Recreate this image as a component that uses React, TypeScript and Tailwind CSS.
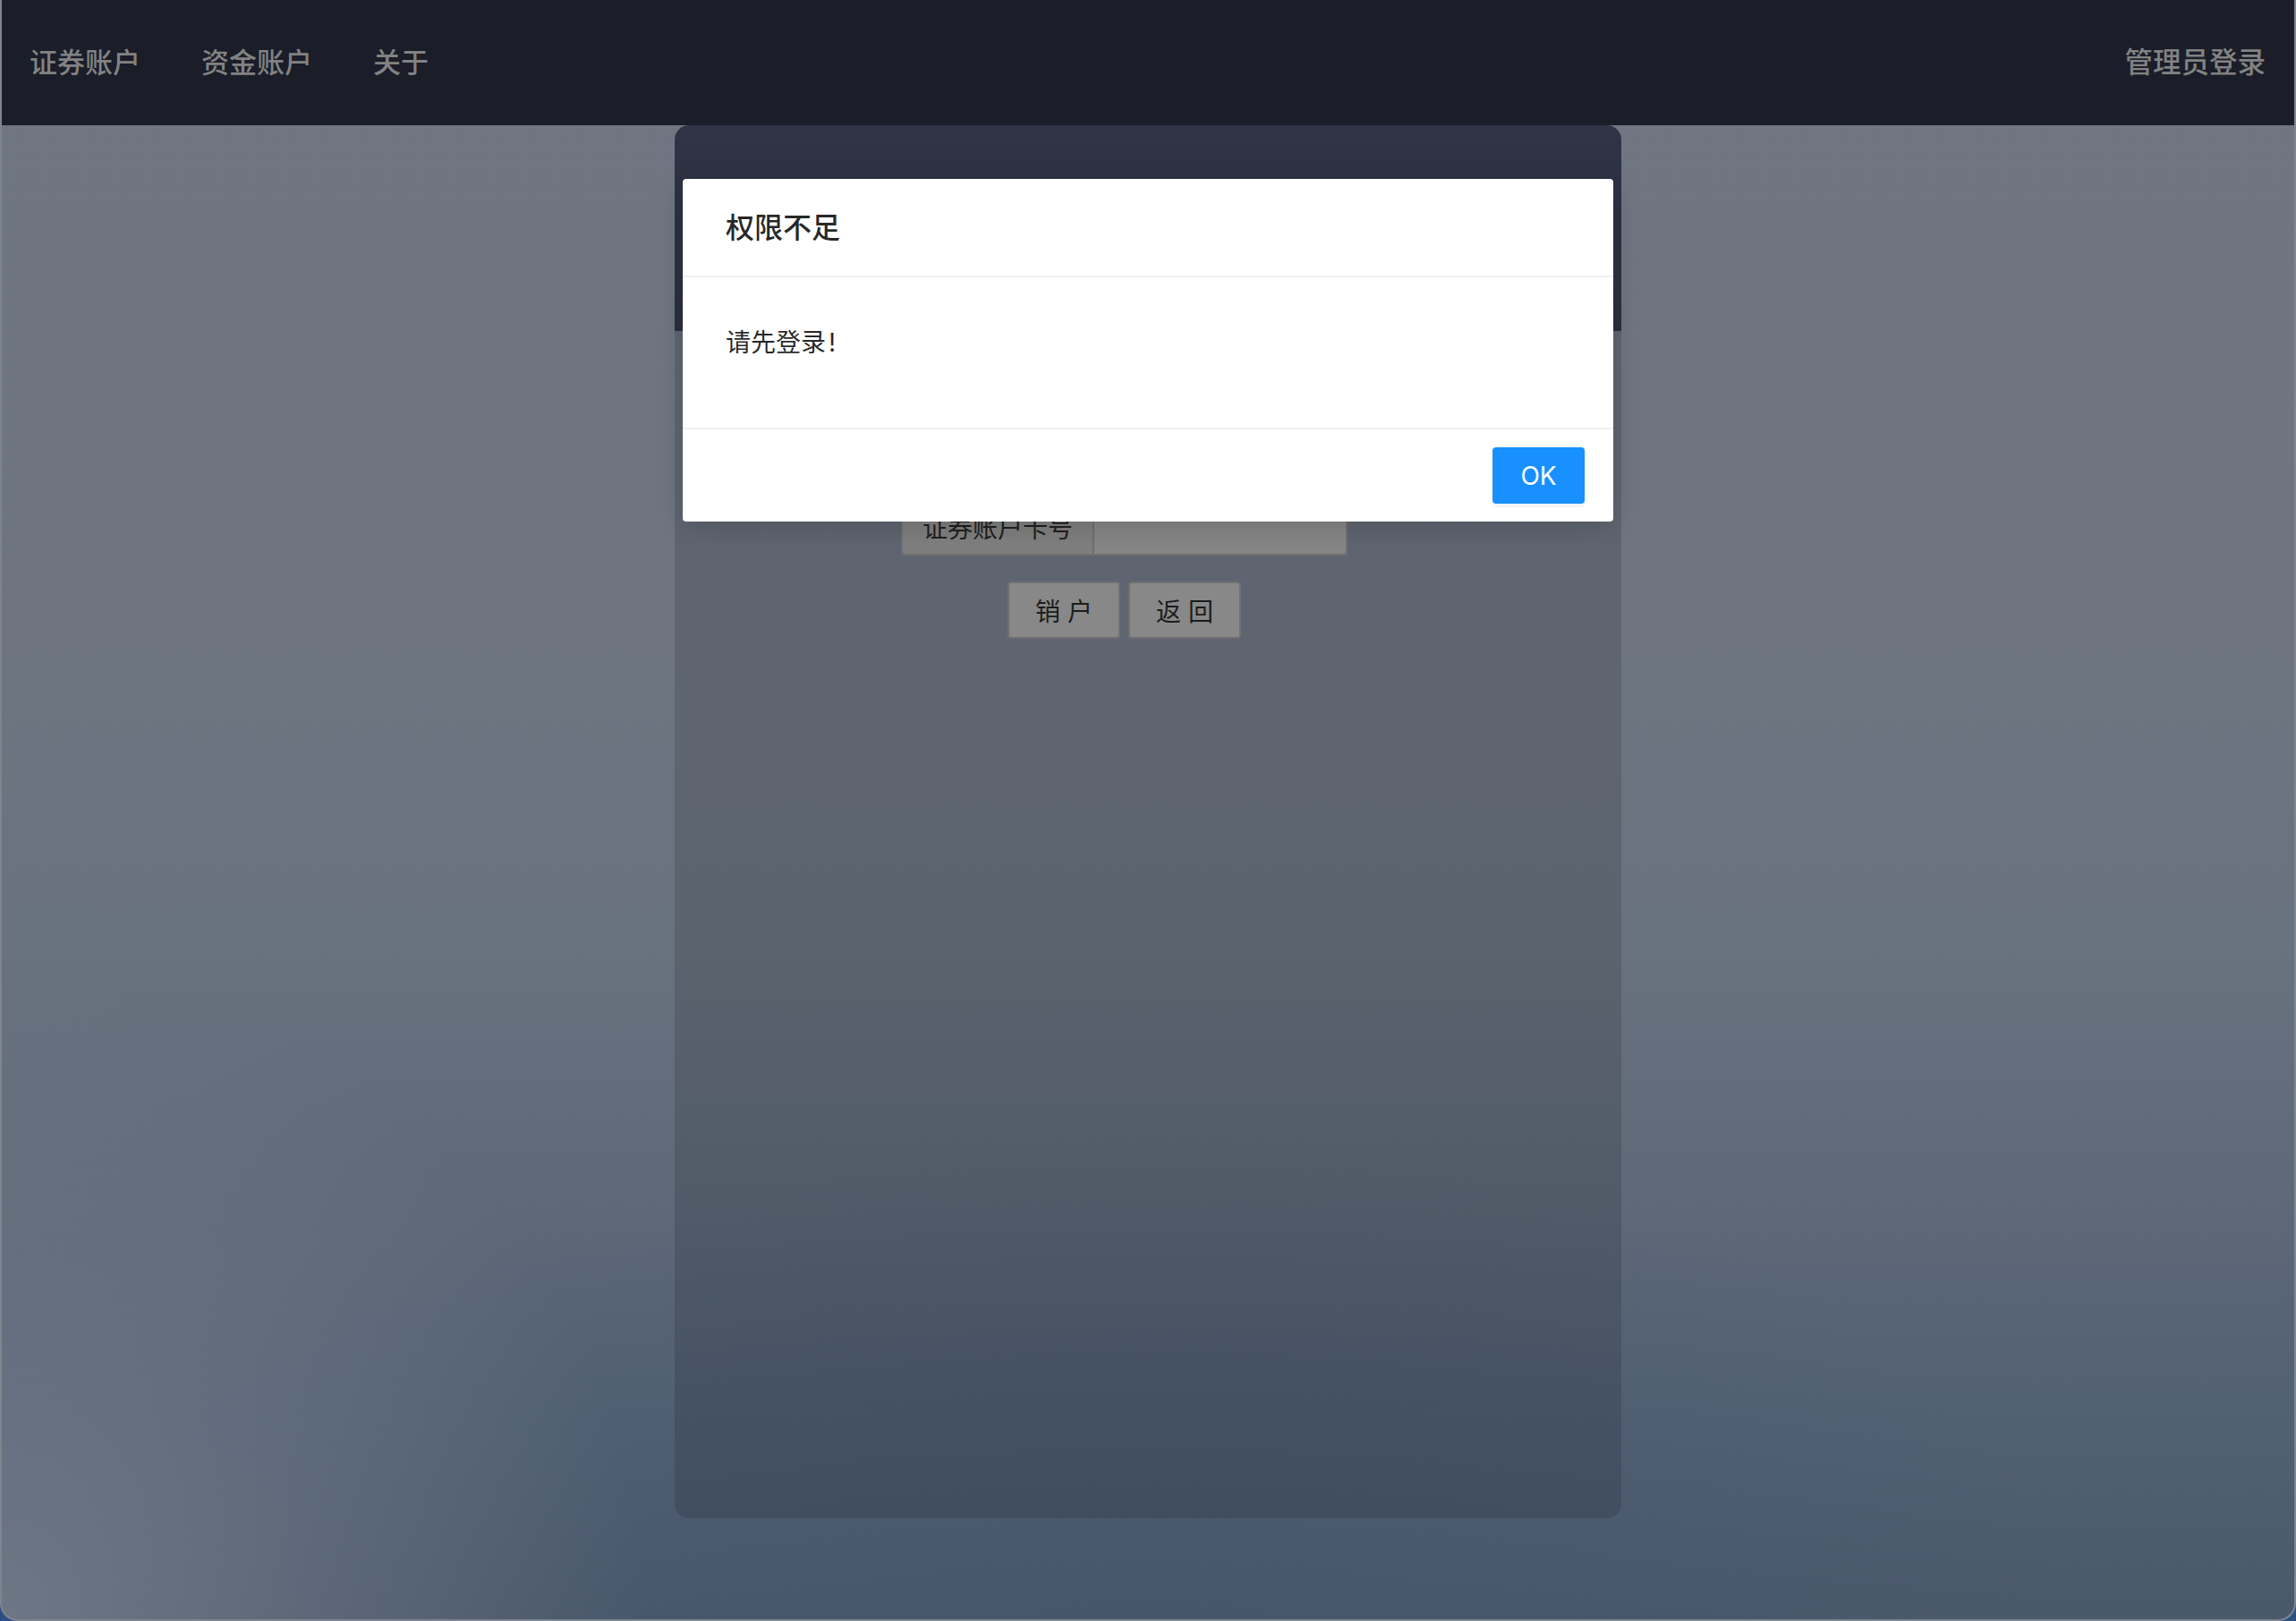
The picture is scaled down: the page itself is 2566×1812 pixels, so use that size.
import React from "react";

const cjk = { fontFamily: '"Noto Sans CJK SC", "Noto Sans", sans-serif' };
const latin = { fontFamily: 'Inter, "Noto Sans CJK SC", sans-serif' };

export default function App() {
  return (
    <div className="w-[2566px] h-[1812px] bg-[#2d4f86] overflow-hidden" style={cjk}>
      <div className="relative w-full h-full flex flex-col rounded-b-[20px] overflow-hidden border-x-2 border-b-2 border-[#7f858e] bg-[radial-gradient(ellipse_28%_40%_at_0%_100%,rgba(118,126,140,0.8),transparent),radial-gradient(ellipse_40%_30%_at_50%_100%,rgba(62,80,106,0.35),transparent),linear-gradient(180deg,#6f7681_0%,#6e7581_40%,#69727f_58%,#5d6878_75%,#516073_88%,#4a586b_100%)]">
        {/* Nav */}
        <nav className="h-[140px] shrink-0 bg-[#1b1d29] flex items-center justify-between pl-[31px] pr-[32px] pb-[4px]">
          <div className="flex items-center gap-[68px] text-[31px] font-medium text-[#828282]">
            <span>证券账户</span>
            <span>资金账户</span>
            <span>关于</span>
          </div>
          <span className="text-[31.5px] font-medium text-[#828282]">管理员登录</span>
        </nav>

        {/* Main */}
        <main className="flex-1 flex justify-center">
          <div className="w-[1058px] h-[1557px] rounded-[16px] overflow-hidden flex flex-col">
            <div className="h-[230px] shrink-0 bg-[linear-gradient(180deg,#2f3446,#2b2f3e)]" />
            <div className="flex-1 bg-black/[0.13] flex flex-col items-center pr-[53px] pt-[187px]">
              <div className="flex h-[64px] w-[499px] rounded-[4px] border-2 border-[#6f6f6f] overflow-hidden">
                <div className="w-[214px] shrink-0 bg-[#7f7f7f] border-r-2 border-[#6f6f6f] flex items-center justify-center text-[28px] text-[#1f1f1f]">
                  证券账户卡号
                </div>
                <div className="flex-1 bg-[#868686]" />
              </div>
              <div className="flex gap-[9px] mt-[29px]">
                <button className="w-[126px] h-[64px] rounded-[4px] border-2 border-[#707070] bg-[#888888] text-[28px] text-[#1c1c1c] tracking-[8px] pl-[8px]">
                  销户
                </button>
                <button className="w-[126px] h-[64px] rounded-[4px] border-2 border-[#707070] bg-[#888888] text-[28px] text-[#1c1c1c] tracking-[8px] pl-[8px]">
                  返回
                </button>
              </div>
            </div>
          </div>
        </main>

        {/* Modal */}
        <div className="absolute inset-x-0 top-[200px] flex justify-center">
          <div className="w-[1040px] bg-white rounded-[4px] shadow-[0_6px_32px_rgba(0,0,0,0.16)] flex flex-col">
            <div className="px-[48px] py-[32px] border-b-2 border-[#f0f0f0]">
              <div className="text-[32px] leading-[44px] font-medium text-black/[0.85] -mt-[2px] mb-[2px]">权限不足</div>
            </div>
            <div className="h-[168px] px-[48px] pt-[51px]">
              <div className="text-[28px] leading-[44px] text-black/[0.85]" style={latin}>
                请先登录<span className="ml-[3px]">!</span>
              </div>
            </div>
            <div className="border-t-2 border-[#f0f0f0] px-[32px] py-[20px] flex justify-end">
              <button
                className="w-[103px] h-[63px] rounded-[4px] bg-[#1890ff] text-white text-[28px] shadow-[0_4px_0_rgba(0,0,0,0.045)]"
                style={latin}
              >
                OK
              </button>
            </div>
          </div>
        </div>
      </div>
    </div>
  );
}
